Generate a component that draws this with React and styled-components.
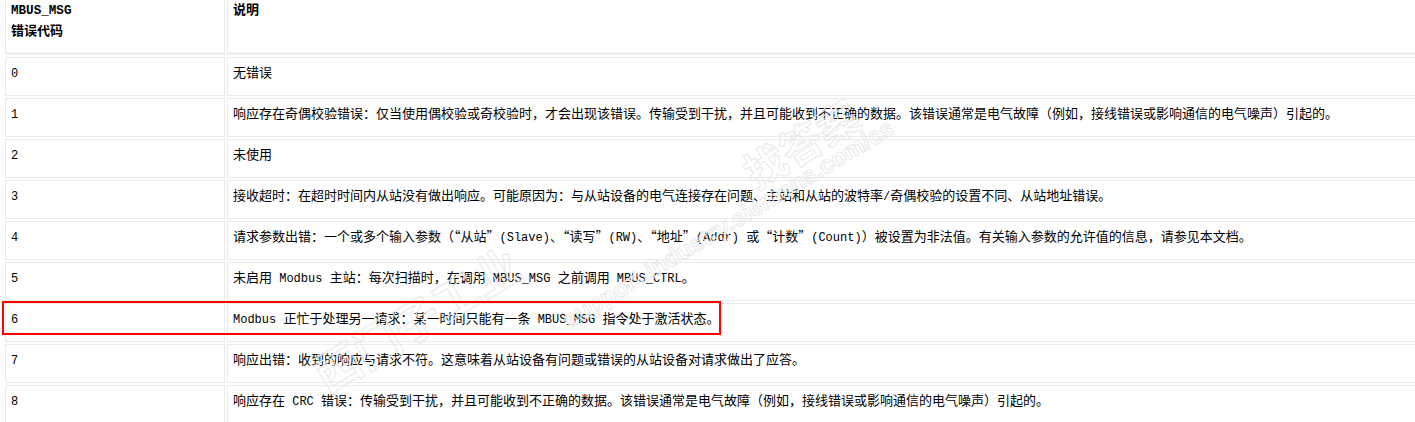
import React from 'react';
import styled, { createGlobalStyle } from 'styled-components';

const GlobalStyle = createGlobalStyle`
  html, body {
    margin: 0;
    padding: 0;
    background: #fff;
    overflow: hidden;
  }
`;

const Page = styled.div`
  position: relative;
  width: 1415px;
  height: 422px;
  overflow: hidden;
`;

const Table = styled.table`
  border-collapse: separate;
  border-spacing: 2px;
  margin: -13px 0 0 3px;
  width: 1450px;
  font-family: 'Noto Sans CJK SC', sans-serif;
  font-size: 13px;
  color: #000;
`;

const HeadCell = styled.th`
  box-sizing: border-box;
  width: ${({ $width }) => ($width ? `${$width}px` : 'auto')};
  height: 66px;
  border: 1px solid #ebebeb;
  border-bottom: 3px solid #efefef;
  padding: 8px 5px 0;
  line-height: 21px;
  text-align: left;
  vertical-align: top;
  font-weight: bold;
`;

const Cell = styled.td`
  box-sizing: border-box;
  width: ${({ $width }) => ($width ? `${$width}px` : 'auto')};
  height: 39px;
  border: 1px solid #ebebeb;
  padding: 0 5px 10px;
  line-height: 18px;
  white-space: nowrap;
  vertical-align: middle;
`;

const Latin = styled.span`
  font-family: 'Liberation Mono', monospace;
  font-size: ${({ $head }) => ($head ? '12.6px' : '12px')};
  line-height: 1;
  white-space: pre;
`;

const Highlight = styled.div`
  position: absolute;
  left: 2px;
  top: 301px;
  width: 719px;
  height: 34px;
  box-sizing: border-box;
  border: 2px solid #ff0000;
  pointer-events: none;
`;

const Mark = styled.div`
  position: absolute;
  left: ${({ $x }) => $x}px;
  top: ${({ $y }) => $y}px;
  transform: translate(-50%, -50%) rotate(-31deg);
  font-family: ${({ $latin }) =>
    $latin ? "'Liberation Sans', sans-serif" : "'Noto Sans CJK SC', sans-serif"};
  font-size: ${({ $size }) => $size}px;
  font-weight: bold;
  white-space: nowrap;
  color: rgba(0, 0, 0, 0.01);
  -webkit-text-stroke: 1px #e9e9e9;
  pointer-events: none;
`;

// split ascii runs so they get the half-width latin face
const Text = ({ children, head }) =>
  children.split(/([\x20-\x7e]+)/).map((part, i) =>
    /^[\x20-\x7e]+$/.test(part) ? (
      <Latin key={i} $head={head}>
        {part}
      </Latin>
    ) : (
      part
    )
  );

const rows = [
  ['0', '无错误'],
  [
    '1',
    '响应存在奇偶校验错误：仅当使用偶校验或奇校验时，才会出现该错误。传输受到干扰，并且可能收到不正确的数据。该错误通常是电气故障（例如，接线错误或影响通信的电气噪声）引起的。',
  ],
  ['2', '未使用'],
  [
    '3',
    '接收超时：在超时时间内从站没有做出响应。可能原因为：与从站设备的电气连接存在问题、主站和从站的波特率/奇偶校验的设置不同、从站地址错误。',
  ],
  [
    '4',
    '请求参数出错：一个或多个输入参数（“从站”(Slave)、“读写”(RW)、“地址”(Addr) 或“计数”(Count)）被设置为非法值。有关输入参数的允许值的信息，请参见本文档。',
  ],
  ['5', '未启用 Modbus 主站：每次扫描时，在调用 MBUS_MSG 之前调用 MBUS_CTRL。'],
  ['6', 'Modbus 正忙于处理另一请求：某一时间只能有一条 MBUS_MSG 指令处于激活状态。'],
  ['7', '响应出错：收到的响应与请求不符。这意味着从站设备有问题或错误的从站设备对请求做出了应答。'],
  [
    '8',
    '响应存在 CRC 错误：传输受到干扰，并且可能收到不正确的数据。该错误通常是电气故障（例如，接线错误或影响通信的电气噪声）引起的。',
  ],
];

const App = () => (
  <Page lang="zh-CN">
    <GlobalStyle />
    <Table>
      <thead>
        <tr>
          <HeadCell $width={220}>
            <Text head>MBUS_MSG</Text>
            <br />
            错误代码
          </HeadCell>
          <HeadCell>说明</HeadCell>
        </tr>
      </thead>
      <tbody>
        {rows.map(([code, desc]) => (
          <tr key={code}>
            <Cell $width={220}>
              <Text>{code}</Text>
            </Cell>
            <Cell>
              <Text>{desc}</Text>
            </Cell>
          </tr>
        ))}
      </tbody>
    </Table>

    <Mark $x={415} $y={318} $size={46}>
      西门子工业
    </Mark>
    <Mark $x={800} $y={142} $size={42}>
      找答案
    </Mark>
    <Mark $x={728} $y={224} $size={24} $latin>
      support.industry.siemens.com/cs
    </Mark>

    <Highlight />
  </Page>
);

export default App;
